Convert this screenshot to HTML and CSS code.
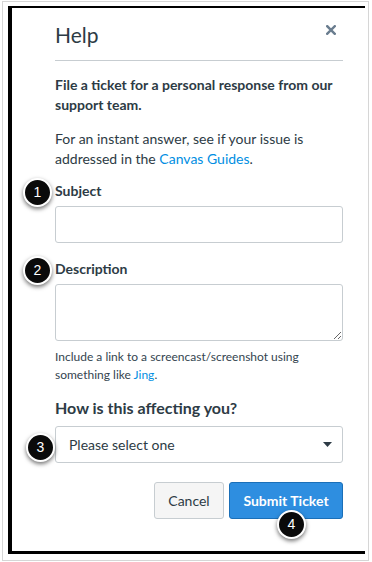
FILE: index.html
```html
<!DOCTYPE html>
<html lang="en">
<head>
<meta charset="utf-8">
<title>Help</title>
<link rel="stylesheet" href="styles.css">
</head>
<body>
<div class="outer">
  <div class="dialog">
    <div class="header">
      <h1 class="title">Help</h1>
      <svg class="close" width="10" height="10" viewBox="0 0 10 10" aria-label="Close">
        <path d="M1.2 1.2 L8.8 8.8 M8.8 1.2 L1.2 8.8" stroke="#6a7d8f" stroke-width="2.4" stroke-linecap="square"/>
      </svg>
    </div>
    <div class="body">
      <p class="lead">File a ticket for a personal response from our support team.</p>
      <p class="text">For an instant answer, see if your issue is addressed in the <a class="link" href="#">Canvas Guides</a>.</p>
      <label class="label label-subject">Subject</label>
      <input class="field" type="text">
      <label class="label label-desc">Description</label>
      <textarea class="area"></textarea>
      <p class="hint">Include a link to a screencast/screenshot using something like <a class="link" href="#">Jing</a>.</p>
      <label class="label label-big">How is this affecting you?</label>
      <div class="select">
        <span>Please select one</span>
        <svg width="9" height="5" viewBox="0 0 9 5"><path d="M0 0 H9 L4.5 5 Z" fill="#2d3b45"/></svg>
      </div>
      <div class="actions">
        <button class="btn btn-cancel" type="button">Cancel</button>
        <button class="btn btn-submit" type="button">Submit Ticket</button>
      </div>
    </div>
  </div>
  <span class="badge b1">1</span>
  <span class="badge b2">2</span>
  <span class="badge b3">3</span>
  <span class="badge b4">4</span>
</div>
</body>
</html>
```
FILE: styles.css
```css
html, body {
  margin: 0;
  padding: 0;
  background: #fff;
}
body {
  font-family: Lato, "Liberation Sans", sans-serif;
  color: #2d3b45;
  padding-top: 1px;
}
.outer {
  position: relative;
  box-sizing: border-box;
  margin: 0 3px 0 2px;
  width: 367px;
  height: 560px;
  border: 1px solid #d6d6d6;
  padding: 4px 0 0 5px;
}
.dialog {
  box-sizing: border-box;
  width: 357px;
  height: 548px;
  border-left: 4px solid #000;
  border-top: 2px solid #000;
  border-bottom: 3px solid #000;
  background: #fff;
}
.header {
  display: flex;
  align-items: center;
  justify-content: space-between;
  height: 52px;
  box-sizing: content-box;
  margin: 0 22px 0 43px;
  border-bottom: 1px solid #c7cdd1;
}
.title {
  margin: 2px 0 0 0;
  font-size: 21px;
  font-weight: 400;
  line-height: 1.2;
  color: #2d3b45;
}
.close {
  align-self: flex-start;
  margin-top: 17px;
  margin-right: 7px;
}
.body {
  display: flex;
  flex-direction: column;
  padding: 0 22px 0 43px;
}
.lead {
  margin: 14px 0 0 0;
  font-size: 14px;
  line-height: 20px;
  font-weight: 700;
}
.text {
  margin: 14px 0 0 0;
  font-size: 14px;
  line-height: 20px;
}
.link {
  color: #008ee2;
  text-decoration: none;
}
.label {
  display: block;
  font-size: 14px;
  line-height: 20px;
  font-weight: 700;
}
.label-subject { margin-top: 12px; }
.label-desc { margin-top: 16px; }
.label-big {
  margin-top: 14px;
  font-size: 16px;
}
.field {
  box-sizing: border-box;
  margin: 5px 0 0 0;
  width: 288px;
  height: 37px;
  border: 1px solid #c7cdd1;
  border-radius: 3px;
  background: #fff;
  font: 14px Lato, sans-serif;
  outline: none;
}
.area {
  box-sizing: border-box;
  margin: 5px 0 0 0;
  width: 288px;
  height: 57px;
  border: 1px solid #c7cdd1;
  border-radius: 3px;
  background: #fff;
  font: 14px Lato, sans-serif;
  resize: vertical;
  outline: none;
}
.hint {
  margin: 7px 0 0 0;
  font-size: 12px;
  line-height: 18px;
  color: #34444f;
}
.select {
  box-sizing: border-box;
  margin-top: 8px;
  height: 37px;
  display: flex;
  align-items: center;
  justify-content: space-between;
  padding: 0 10px 0 13px;
  border: 1px solid #c7cdd1;
  border-radius: 3px;
  font-size: 14px;
  color: #2d3b45;
}
.actions {
  display: flex;
  justify-content: flex-end;
  gap: 5px;
  margin-top: 19px;
}
.btn {
  box-sizing: border-box;
  height: 37px;
  border-radius: 3px;
  font-family: Lato, sans-serif;
  font-size: 14px;
  padding: 0;
  cursor: pointer;
}
.btn-cancel {
  width: 70px;
  background: #f5f5f5;
  border: 1px solid #c7cdd1;
  color: #2d3b45;
}
.btn-submit {
  width: 114px;
  background: #2e8ee0;
  border: 1px solid #1a6fb8;
  color: #fff;
  font-weight: 700;
}
.badge {
  position: absolute;
  box-sizing: border-box;
  width: 29px;
  height: 29px;
  border: 2px solid #fff;
  border-radius: 50%;
  background: #0a0a0a;
  box-shadow: 0 2px 4px rgba(0, 0, 0, 0.55);
  color: #fff;
  font-family: "Liberation Sans", Arial, sans-serif;
  font-size: 14px;
  line-height: 25px;
  text-align: center;
}
.b1 { left: 20px; top: 176px; }
.b2 { left: 20px; top: 254px; }
.b3 { left: 23px; top: 431px; }
.b4 { left: 274px; top: 508px; }
```
